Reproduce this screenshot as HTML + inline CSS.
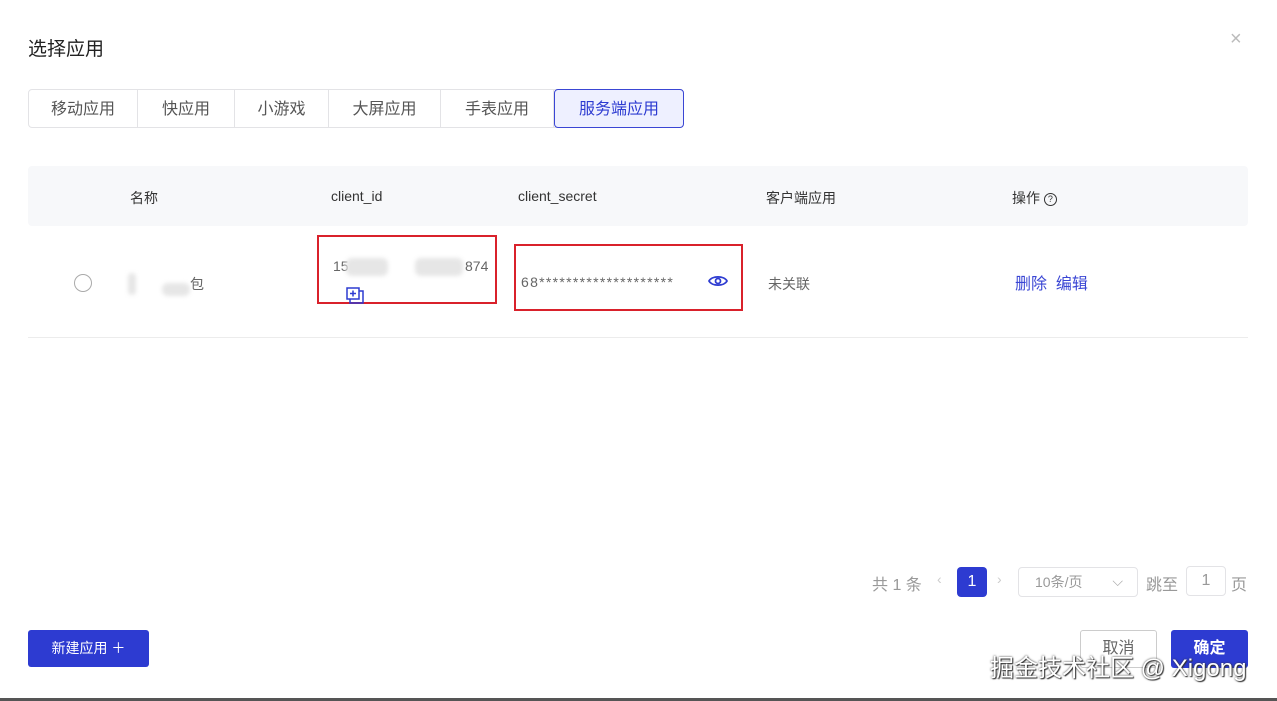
<!DOCTYPE html>
<html><head><meta charset="utf-8"><style>
*{box-sizing:border-box;margin:0;padding:0}
body{width:1277px;height:701px;background:#fff;font-family:"Liberation Sans","Noto Sans CJK SC",sans-serif;position:relative;overflow:hidden;color:#333}
.a{position:absolute;white-space:nowrap}
.tabs{position:absolute;left:28px;top:89px;height:39px;display:flex;border:1px solid #e3e3e6;border-radius:4px}
.tabs div{height:37px;line-height:39px;font-size:16px;color:#555;text-align:center;border-right:1px solid #e3e3e6}
.tabs div.on{background:#eef0ff;color:#2d3bd1;border:1px solid #3a46d4;border-radius:4px;margin:-1px -1px -1px 0;height:39px;line-height:39px}
.hdr{position:absolute;left:28px;top:166px;width:1220px;height:60px;background:#f7f8fa;border-radius:4px}
.th{font-size:14px;color:#333;top:188px}
.red{position:absolute;border:2px solid #d9212b}
.blur{position:absolute;background:#e6e6e6;border-radius:6px;filter:blur(2px)}
</style></head><body>
<div class="a" style="left:28px;top:34px;font-size:19px;color:#222">选择应用</div>
<div class="a" style="left:1230px;top:28px;font-size:20px;color:#bbb">×</div>
<div class="tabs">
<div style="width:109px">移动应用</div><div style="width:97px">快应用</div><div style="width:94px">小游戏</div><div style="width:112px">大屏应用</div><div style="width:113px">手表应用</div><div class="on" style="width:130px">服务端应用</div>
</div>
<div class="hdr"></div>
<div class="a th" style="left:130px">名称</div>
<div class="a th" style="left:331px">client_id</div>
<div class="a th" style="left:518px">client_secret</div>
<div class="a th" style="left:766px">客户端应用</div>
<div class="a th" style="left:1012px">操作 <span style="display:inline-block;width:13px;height:13px;border:1.3px solid #333;border-radius:50%;font-size:9px;line-height:11px;text-align:center;vertical-align:1px">?</span></div>
<div class="a" style="left:74px;top:274px;width:18px;height:18px;border:1px solid #aaa;border-radius:50%"></div>
<div class="blur" style="left:128px;top:273px;width:8px;height:22px"></div>
<div class="blur" style="left:162px;top:283px;width:28px;height:13px"></div>
<div class="a" style="left:190px;top:274px;font-size:14px;color:#666">包</div>
<div class="red" style="left:317px;top:235px;width:180px;height:69px"></div>
<div class="a" style="left:333px;top:258px;font-size:14px;color:#666">15</div>
<div class="blur" style="left:346px;top:258px;width:42px;height:18px"></div>
<div class="blur" style="left:415px;top:258px;width:48px;height:18px"></div>
<div class="a" style="left:465px;top:258px;font-size:14px;color:#666">874</div>
<svg class="a" style="left:346px;top:287px" width="20" height="18" viewBox="0 0 20 18"><rect x="4" y="4" width="13" height="12" fill="none" stroke="#2d3bd1" stroke-width="1.5"/><rect x="1" y="1" width="12" height="11" fill="#fff" stroke="#2d3bd1" stroke-width="1.5"/><path d="M7 3.5v6M4 6.5h6" stroke="#2d3bd1" stroke-width="1.5"/></svg>
<div class="red" style="left:514px;top:244px;width:229px;height:67px"></div>
<div class="a" style="left:521px;top:274px;font-size:14px;color:#666;letter-spacing:1.3px">68********************</div>
<svg class="a" style="left:707px;top:273px" width="22" height="16" viewBox="0 0 22 16"><path d="M2 8C5 2.5 17 2.5 20 8C17 13.5 5 13.5 2 8Z" fill="none" stroke="#2d3bd1" stroke-width="1.8"/><circle cx="11" cy="8" r="2.5" fill="none" stroke="#2d3bd1" stroke-width="1.8"/></svg>
<div class="a" style="left:768px;top:274px;font-size:14px;color:#666">未关联</div>
<div class="a" style="left:1015px;top:270px;font-size:16px;color:#3a46d4">删除 &nbsp;编辑</div>
<div class="a" style="left:28px;top:337px;width:1220px;height:1px;background:#ececec"></div>
<div class="a" style="left:872px;top:571px;font-size:16px;color:#999">共 1 条</div>
<div class="a" style="left:937px;top:571px;font-size:14px;color:#ccc">‹</div>
<div class="a" style="left:957px;top:567px;width:30px;height:30px;background:#2d3bd1;color:#fff;border-radius:4px;text-align:center;line-height:30px;font-size:16px">1</div>
<div class="a" style="left:997px;top:571px;font-size:14px;color:#ccc">›</div>
<div class="a" style="left:1018px;top:567px;width:120px;height:30px;border:1px solid #e3e3e6;border-radius:4px;font-size:14px;color:#999;line-height:28px;padding-left:16px">10条/页<span style="position:absolute;right:14px;top:-1px;color:#aaa">⌵</span></div>
<div class="a" style="left:1146px;top:571px;font-size:16px;color:#999">跳至</div>
<div class="a" style="left:1186px;top:566px;width:40px;height:30px;border:1px solid #e3e3e6;border-radius:4px;text-align:center;line-height:28px;font-size:16px;color:#999">1</div>
<div class="a" style="left:1231px;top:571px;font-size:16px;color:#999">页</div>
<div class="a" style="left:28px;top:630px;width:121px;height:37px;background:#2d3bd1;color:#fff;border-radius:3px;font-size:14px;line-height:37px;text-align:center">新建应用 ＋</div>
<div class="a" style="left:1080px;top:630px;width:77px;height:38px;border:1px solid #ccc;border-radius:3px;font-size:16px;color:#666;line-height:36px;text-align:center">取消</div>
<div class="a" style="left:1171px;top:630px;width:77px;height:38px;background:#2d3bd1;border-radius:3px;font-size:16px;color:#fff;font-weight:bold;line-height:38px;text-align:center">确定</div>
<div class="a" style="left:990px;top:648px;font-size:24px;color:#fff;text-shadow:0 0 2px #333,1px 1px 1px #333">掘金技术社区 @ Xigong</div>
<div class="a" style="left:0;top:698px;width:1277px;height:3px;background:#555"></div>
</body></html>
